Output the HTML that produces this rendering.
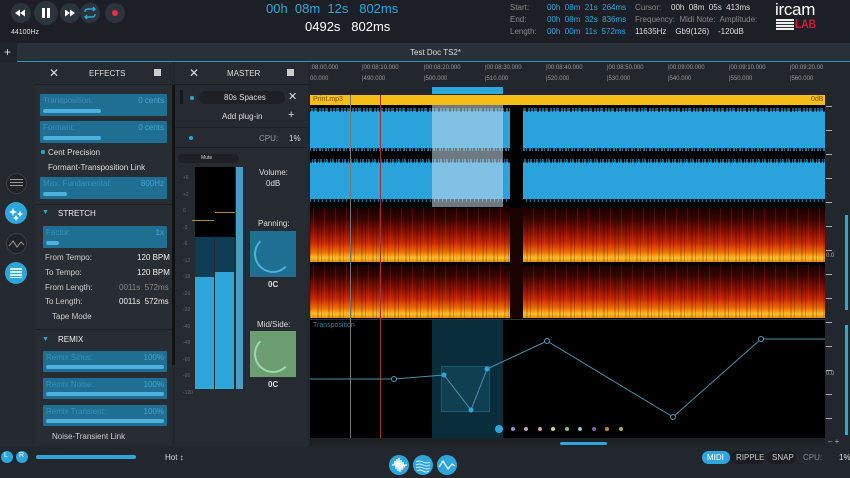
<!DOCTYPE html>
<html><head><meta charset="utf-8"><style>
*{margin:0;padding:0;box-sizing:border-box}
body{width:850px;height:478px;overflow:hidden;background:#22272d;font-family:"Liberation Sans",sans-serif;color:#ddd;position:relative}
.a{position:absolute}
.t{position:absolute;font-size:8px;white-space:nowrap}
.sl{position:absolute;background:#1f6f93;border-radius:1px}
.sl .lb{position:absolute;left:3px;top:2px;font-size:8px;color:#3a8fb5}
.sl .v{position:absolute;right:3px;top:2px;font-size:8px;color:#4aa0c8}
.sl .tr{position:absolute;left:3px;right:3px;bottom:3px;height:4px;background:#4fb0dc;border-radius:2px}
.circ{position:absolute;border-radius:50%}
.ruler{position:absolute;font-size:6px;color:#999}
</style></head><body>
<!-- top bar -->
<div class="a" style="left:0;top:0;width:850px;height:43px;background:#1c2026"></div>
<svg class="a" style="left:0;top:0" width="130" height="28">
<circle cx="21" cy="13" r="10" fill="#2e343b"/>
<path d="M15 13 L20 9.5 V16.5Z M20 13 L25 9.5 V16.5Z" fill="#fff"/>
<circle cx="46" cy="13" r="12" fill="#2e343b"/>
<rect x="42" y="8" width="3" height="10" fill="#fff"/><rect x="47" y="8" width="3" height="10" fill="#fff"/>
<circle cx="70" cy="13" r="10" fill="#2e343b"/>
<path d="M65 9.5 L70 13 L65 16.5Z M70 9.5 L75 13 L70 16.5Z" fill="#fff"/>
<circle cx="90" cy="13" r="10" fill="#2e343b"/>
<path d="M85 12 Q85 9 88 9 H95 M93 7 L95 9 L93 11 M95 14 Q95 17 92 17 H85 M87 15 L85 17 L87 19" fill="none" stroke="#2fa6db" stroke-width="1.4"/>
<circle cx="115" cy="13" r="10" fill="#2e343b"/>
<circle cx="115" cy="13" r="3" fill="#e0304a"/>
</svg>
<div class="t" style="left:11px;top:29px;font-size:7px;color:#ddd">44100Hz</div>
<div class="t" style="left:266px;top:1px;font-size:13px;color:#2fa6db">00h&nbsp; 08m&nbsp; 12s&nbsp;&nbsp; 802ms</div>
<div class="t" style="left:305px;top:19px;font-size:13px;color:#fff">0492s&nbsp;&nbsp; 802ms</div>
<div class="t" style="left:510px;top:3px;color:#888">Start:</div>
<div class="t" style="left:510px;top:15px;color:#888">End:</div>
<div class="t" style="left:510px;top:27px;color:#888">Length:</div>
<div class="t" style="left:547px;top:3px;color:#2fa6db">00h&nbsp; 08m&nbsp; 21s&nbsp; 264ms</div>
<div class="t" style="left:547px;top:15px;color:#2fa6db">00h&nbsp; 08m&nbsp; 32s&nbsp; 836ms</div>
<div class="t" style="left:547px;top:27px;color:#2fa6db">00h&nbsp; 00m&nbsp; 11s&nbsp; 572ms</div>
<div class="t" style="left:635px;top:3px;color:#888">Cursor:</div>
<div class="t" style="left:671px;top:3px;color:#ddd">00h&nbsp; 08m&nbsp; 05s&nbsp; 413ms</div>
<div class="t" style="left:635px;top:15px;color:#888">Frequency:&nbsp; Midi Note:&nbsp; Amplitude:</div>
<div class="t" style="left:635px;top:27px;color:#ddd">11635Hz&nbsp;&nbsp;&nbsp; Gb9(126)&nbsp;&nbsp;&nbsp; -120dB</div>
<div class="t" style="left:775px;top:0px;font-size:17px;color:#fff;letter-spacing:-0.3px">ircam</div>
<div class="a" style="left:776px;top:19px;width:18px;height:11px;background:repeating-linear-gradient(#eee 0 2px,#333 2px 3px)"></div>
<div class="t" style="left:795px;top:17px;font-size:12px;color:#d02030;font-weight:bold;transform:scaleX(0.85);transform-origin:left">LAB</div>
<!-- tab bar -->
<div class="a" style="left:0;top:43px;width:850px;height:19px;background:#2a3037"></div>
<div class="a" style="left:0;top:43px;width:17px;height:19px;background:#20252b"></div>
<div class="t" style="left:4px;top:45px;font-size:12px;color:#ddd">+</div>
<div class="t" style="left:410px;top:48px;font-size:8px;color:#ddd">Test Doc TS2*</div>
<div class="a" style="left:17px;top:61px;width:833px;height:1px;background:#2f93c2"></div>
<!-- left rail -->
<div class="a" style="left:0;top:62px;width:35px;height:384px;background:#252a30"></div>
<div class="circ" style="left:6px;top:173px;width:21px;height:21px;background:#1f2328;border:1px solid #3a4048"></div>
<div class="a" style="left:10px;top:179px;width:13px;height:9px;background:repeating-linear-gradient(#999 0 1px,transparent 1px 3px)"></div>
<div class="circ" style="left:5px;top:202px;width:22px;height:22px;background:#2fa6db"></div>
<svg class="a" style="left:5px;top:202px" width="22" height="22"><g fill="#fff"><path d="M8 6 l1.2 2.8 2.8 1.2 -2.8 1.2 -1.2 2.8 -1.2 -2.8 -2.8 -1.2 2.8 -1.2z"/><path d="M15 9 l1 2 2 1 -2 1 -1 2 -1 -2 -2 -1 2 -1z"/><path d="M11 13 l1 2 2 1 -2 1 -1 2 -1 -2 -2 -1 2 -1z"/></g></svg>
<div class="circ" style="left:6px;top:233px;width:21px;height:21px;background:#1f2328;border:1px solid #3a4048"></div>
<svg class="a" style="left:6px;top:233px" width="21" height="21"><polyline points="3,13 7,8 11,14 15,9 18,12" fill="none" stroke="#999" stroke-width="1"/></svg>
<div class="circ" style="left:5px;top:262px;width:22px;height:22px;background:#2fa6db"></div>
<div class="a" style="left:10px;top:268px;width:12px;height:10px;background:repeating-linear-gradient(#cfefff 0 2px,transparent 2px 3px)"></div>
<!-- effects panel -->
<div class="a" style="left:35px;top:62px;width:137px;height:384px;background:#282d33"></div>
<div class="a" style="left:35px;top:62px;width:137px;height:23px;background:#262b31;border-bottom:1px solid #1d2126"></div>
<div class="t" style="left:49px;top:66px;font-size:12px;color:#ddd">✕</div>
<div class="t" style="left:89px;top:69px;font-size:8px;color:#ddd">EFFECTS</div>
<div class="a" style="left:154px;top:69px;width:7px;height:7px;background:#ccc"></div>
<div class="sl" style="left:40px;top:94px;width:127px;height:22px"><span class="lb">Transposition:</span><span class="v">0 cents</span><div class="tr" style="right:66px"></div></div>
<div class="sl" style="left:40px;top:121px;width:127px;height:22px"><span class="lb">Formant:</span><span class="v">0 cents</span><div class="tr" style="right:66px"></div></div>
<div class="circ" style="left:41px;top:150px;width:4px;height:4px;background:#2fa6db"></div>
<div class="t" style="left:48px;top:148px">Cent Precision</div>
<div class="t" style="left:48px;top:163px">Formant-Transposition Link</div>
<div class="sl" style="left:40px;top:177px;width:127px;height:22px"><span class="lb">Max. Fundamental:</span><span class="v">800Hz</span><div class="tr" style="right:100px"></div></div>
<div class="a" style="left:35px;top:204px;width:137px;height:1px;background:#1d2126"></div>
<div class="t" style="left:42px;top:209px;font-size:7px;color:#2fa6db">▼</div>
<div class="t" style="left:58px;top:209px;font-size:8px;color:#eee">STRETCH</div>
<div class="sl" style="left:43px;top:226px;width:124px;height:22px"><span class="lb">Factor:</span><span class="v">1x</span><div class="tr" style="right:108px"></div></div>
<div class="t" style="left:45px;top:253px;color:#ccc">From Tempo:</div><div class="t" style="left:137px;top:253px;color:#eee">120 BPM</div>
<div class="t" style="left:45px;top:268px;color:#ccc">To Tempo:</div><div class="t" style="left:137px;top:268px;color:#eee">120 BPM</div>
<div class="t" style="left:45px;top:283px;color:#ccc">From Length:</div><div class="t" style="left:119px;top:283px;color:#888">0011s&nbsp; 572ms</div>
<div class="t" style="left:45px;top:297px;color:#ccc">To Length:</div><div class="t" style="left:119px;top:297px;color:#eee">0011s&nbsp; 572ms</div>
<div class="t" style="left:52px;top:312px;color:#ccc">Tape Mode</div>
<div class="a" style="left:35px;top:329px;width:137px;height:1px;background:#1d2126"></div>
<div class="t" style="left:42px;top:336px;font-size:7px;color:#2fa6db">▼</div>
<div class="t" style="left:58px;top:335px;font-size:8px;color:#eee">REMIX</div>
<div class="sl" style="left:43px;top:351px;width:124px;height:21px"><span class="lb">Remix Sinus:</span><span class="v">100%</span><div class="tr"></div></div>
<div class="sl" style="left:43px;top:378px;width:124px;height:21px"><span class="lb">Remix Noise:</span><span class="v">100%</span><div class="tr"></div></div>
<div class="sl" style="left:43px;top:405px;width:124px;height:21px"><span class="lb">Remix Transient:</span><span class="v">100%</span><div class="tr"></div></div>
<div class="t" style="left:52px;top:432px;color:#ccc">Noise-Transient Link</div>
<div class="a" style="left:172px;top:85px;width:3px;height:280px;background:#111"></div>
<!-- master panel -->
<div class="a" style="left:175px;top:62px;width:133px;height:384px;background:#262b31"></div>
<div class="a" style="left:175px;top:62px;width:133px;height:23px;border-bottom:1px solid #1d2126"></div>
<div class="t" style="left:189px;top:66px;font-size:12px;color:#ddd">✕</div>
<div class="t" style="left:227px;top:69px;font-size:8px;color:#ddd">MASTER</div>
<div class="a" style="left:287px;top:69px;width:7px;height:7px;background:#ccc"></div>
<div class="a" style="left:180px;top:90px;width:3px;height:14px;background:#15181c"></div>
<div class="circ" style="left:190px;top:96px;width:4px;height:4px;background:#2fa6db"></div>
<div class="a" style="left:199px;top:91px;width:86px;height:13px;background:#1d2126;border-radius:7px"></div>
<div class="t" style="left:224px;top:93px">80s Spaces</div>
<div class="t" style="left:288px;top:90px;font-size:11px">✕</div>
<div class="t" style="left:222px;top:112px">Add plug-in</div>
<div class="t" style="left:288px;top:109px;font-size:11px">+</div>
<div class="a" style="left:175px;top:127px;width:133px;height:1px;background:#1d2126"></div>
<div class="circ" style="left:189px;top:136px;width:4px;height:4px;background:#2fa6db"></div>
<div class="t" style="left:259px;top:134px;color:#999">CPU:</div><div class="t" style="left:289px;top:134px">1%</div>
<div class="a" style="left:175px;top:147px;width:133px;height:1px;background:#1d2126"></div>
<div class="a" style="left:178px;top:154px;width:61px;height:9px;background:#1d2126;border-radius:5px"></div>
<div class="t" style="left:201px;top:155px;font-size:5px;color:#ccc">Mute</div>
<div class="a" style="left:195px;top:167px;width:40px;height:70px;background:#000"></div>
<div class="a" style="left:195px;top:237px;width:19px;height:40px;background:#0e3d55"></div>
<div class="a" style="left:215px;top:237px;width:19px;height:35px;background:#0e3d55"></div>
<div class="a" style="left:195px;top:277px;width:19px;height:112px;background:#2fa6db"></div>
<div class="a" style="left:215px;top:272px;width:19px;height:117px;background:#2fa6db"></div>
<div class="a" style="left:192px;top:220px;width:22px;height:1px;background:#a09040"></div>
<div class="a" style="left:215px;top:212px;width:20px;height:1px;background:#a09040"></div>
<div class="a" style="left:236px;top:167px;width:7px;height:222px;background:#4a9cc4"></div>
<div class="t" style="left:183px;top:170px;font-size:5px;color:#666;line-height:16.5px">+6<br>+2<br>0<br>-3<br>-6<br>-12<br>-18<br>-26<br>-32<br>-40<br>-48<br>-60<br>-90<br>-120</div>
<div class="t" style="left:259px;top:168px">Volume:</div>
<div class="t" style="left:266px;top:179px">0dB</div>
<div class="t" style="left:258px;top:219px">Panning:</div>
<div class="a" style="left:250px;top:231px;width:46px;height:46px;background:#1f6f93"></div>
<div class="circ" style="left:254px;top:235px;width:38px;height:38px;border:2px solid #4fb0dc;border-color:transparent transparent #4fb0dc #4fb0dc"></div>
<div class="t" style="left:268px;top:280px;font-weight:bold">0C</div>
<div class="t" style="left:257px;top:320px">Mid/Side:</div>
<div class="a" style="left:250px;top:331px;width:46px;height:46px;background:#6c9e72"></div>
<div class="circ" style="left:254px;top:335px;width:38px;height:38px;border:2px solid #9ed9b0;border-color:transparent transparent #9ed9b0 #9ed9b0"></div>
<div class="t" style="left:268px;top:380px;font-weight:bold">0C</div>
<!-- ruler -->
<div class="a" style="left:308px;top:62px;width:542px;height:33px;background:#22272d"></div>
<div class="ruler" style="left:310px;top:63px;line-height:11px">:08:00.000<br>00.000</div>
<div class="ruler" style="left:362px;top:63px;line-height:11px">|00:08:10.000<br>|490.000</div>
<div class="ruler" style="left:424px;top:63px;line-height:11px">|00:08:20.000<br>|500.000</div>
<div class="ruler" style="left:485px;top:63px;line-height:11px">|00:08:30.000<br>|510.000</div>
<div class="ruler" style="left:546px;top:63px;line-height:11px">|00:08:40.000<br>|520.000</div>
<div class="ruler" style="left:607px;top:63px;line-height:11px">|00:08:50.000<br>|530.000</div>
<div class="ruler" style="left:668px;top:63px;line-height:11px">|00:09:00.000<br>|540.000</div>
<div class="ruler" style="left:729px;top:63px;line-height:11px">|00:09:10.000<br>|550.000</div>
<div class="ruler" style="left:790px;top:63px;line-height:11px">|00:09:20.00<br>|560.000</div>
<div class="a" style="left:432px;top:87px;width:71px;height:7px;background:#2fa6db"></div>
<!-- tracks -->
<div class="a" style="left:310px;top:95px;width:515px;height:343px;background:#000"></div>
<div class="a" style="left:310px;top:95px;width:515px;height:10px;background:#f6bd16"></div>
<div class="t" style="left:313px;top:96px;font-size:7px;color:#7a5a00">Print.mp3</div>
<div class="t" style="left:811px;top:96px;font-size:7px;color:#7a5a00">0dB</div>
<div class="a" style="left:310px;top:111px;width:515px;height:37px;background:#2aa3dc"></div>
<div class="a" style="left:310px;top:162px;width:515px;height:37px;background:#2aa3dc"></div>
<div class="a" style="left:310px;top:108px;width:515px;height:4px;background:repeating-linear-gradient(90deg,#000 0 1px,#2aa3dc 1px 3px,#000 3px 4px,#2aa3dc 4px 7px,#000 7px 9px,#2aa3dc 9px 11px);opacity:.6"></div>
<div class="a" style="left:310px;top:147px;width:515px;height:4px;background:repeating-linear-gradient(90deg,#2aa3dc 0 1px,transparent 1px 3px,#2aa3dc 3px 5px,transparent 5px 6px);opacity:.7"></div>
<div class="a" style="left:310px;top:159px;width:515px;height:4px;background:repeating-linear-gradient(90deg,#000 0 2px,#2aa3dc 2px 3px,#000 3px 4px,#2aa3dc 4px 6px);opacity:.6"></div>
<div class="a" style="left:310px;top:198px;width:515px;height:4px;background:repeating-linear-gradient(90deg,#2aa3dc 0 1px,transparent 1px 4px);opacity:.7"></div>
<div class="a" style="left:432px;top:105px;width:71px;height:102px;background:rgba(200,220,235,0.55)"></div>
<div class="a" style="left:310px;top:208px;width:515px;height:54px;background:linear-gradient(#1a0000 0%,#3a0500 20%,#8a1000 45%,#c82a00 65%,#f07000 82%,#ffc030 92%,#e89000 100%)"></div>
<div class="a" style="left:310px;top:265px;width:515px;height:53px;background:linear-gradient(#1a0000 0%,#3a0500 20%,#8a1000 45%,#c82a00 65%,#f07000 82%,#ffc030 92%,#e89000 100%)"></div>
<div class="a" style="left:310px;top:208px;width:515px;height:110px;background:repeating-linear-gradient(90deg,rgba(0,0,0,.2) 0 1px,transparent 1px 3px,rgba(255,90,0,.15) 3px 4px,transparent 4px 7px,rgba(0,0,0,.15) 7px 9px,transparent 9px 11px)"></div>
<div class="a" style="left:310px;top:262px;width:515px;height:3px;background:#000"></div>
<div class="a" style="left:510px;top:105px;width:13px;height:213px;background:#000"></div>
<div class="a" style="left:510px;top:208px;width:13px;height:110px;background:#1a0200"></div>
<div class="a" style="left:310px;top:319px;width:515px;height:1px;background:#333"></div>
<div class="a" style="left:432px;top:320px;width:71px;height:118px;background:#0a2d3b"></div>
<div class="a" style="left:441px;top:366px;width:49px;height:46px;background:#113f52;border:1px solid #1a5a72"></div>
<div class="t" style="left:313px;top:322px;font-size:7px;color:#2f7fa6">Transposition</div>
<div class="a" style="left:350px;top:95px;width:1px;height:343px;background:#777"></div>
<div class="a" style="left:380px;top:95px;width:1px;height:343px;background:#a03030"></div>
<svg class="a" style="left:310px;top:320px" width="515" height="118">
<polyline points="0,59 84,59 134,55 161,90 177,49 237,21 363,97 451,19 515,19" fill="none" stroke="#4f8fa8" stroke-width="1"/>
<g fill="#000" stroke="#4f9fc0"><circle cx="84" cy="59" r="2.5"/><circle cx="237" cy="21" r="2.5"/><circle cx="363" cy="97" r="2.5"/><circle cx="451" cy="19" r="2.5"/></g>
<g fill="#2fa6db"><circle cx="134" cy="55" r="2.5"/><circle cx="161" cy="90" r="2.5"/><circle cx="177" cy="49" r="2.5"/></g>
<circle cx="189" cy="109" r="4" fill="#2fa6db"/>
<g><circle cx="203" cy="109" r="2" fill="#9a8ad0"/><circle cx="216" cy="109" r="2" fill="#c0a0c0"/><circle cx="230" cy="109" r="2" fill="#d0a0b0"/><circle cx="243" cy="109" r="2" fill="#d0d090"/><circle cx="257" cy="109" r="2" fill="#80c090"/><circle cx="270" cy="109" r="2" fill="#90c0d0"/><circle cx="284" cy="109" r="2" fill="#8060b0"/><circle cx="297" cy="109" r="2" fill="#d08040"/><circle cx="311" cy="109" r="2" fill="#a0b050"/></g>
</svg>
<!-- right scale -->
<div class="a" style="left:825px;top:95px;width:25px;height:351px;background:#22272d"></div>
<div class="a" style="left:826px;top:95px;width:6px;height:340px;background:repeating-linear-gradient(transparent 0 11px,#aaa 11px 12px,transparent 12px 24px)"></div>
<div class="t" style="left:826px;top:253px;font-size:6px;color:#aaa">0.0</div>
<div class="t" style="left:826px;top:371px;font-size:6px;color:#aaa">0.0</div>
<div class="a" style="left:845px;top:215px;width:3px;height:95px;background:#2fa6db"></div>
<div class="a" style="left:845px;top:325px;width:3px;height:110px;background:#2fa6db"></div>
<div class="t" style="left:828px;top:437px;font-size:8px;color:#aaa">– +</div>
<!-- h scroll -->
<div class="a" style="left:310px;top:438px;width:515px;height:8px;background:#1d2126"></div>
<div class="a" style="left:560px;top:442px;width:47px;height:3px;background:#2fa6db;border-radius:2px"></div>
<!-- bottom bar -->
<div class="a" style="left:0;top:446px;width:850px;height:32px;background:#22272d"></div>
<div class="circ" style="left:1px;top:451px;width:12px;height:12px;background:#2fa6db"></div>
<div class="t" style="left:4px;top:452px;font-size:7px;color:#fff">L</div>
<div class="circ" style="left:16px;top:451px;width:12px;height:12px;background:#2fa6db"></div>
<div class="t" style="left:19px;top:452px;font-size:7px;color:#fff">R</div>
<div class="a" style="left:36px;top:455px;width:100px;height:4px;background:#2fa6db;border-radius:2px"></div>
<div class="t" style="left:165px;top:453px;color:#ddd">Hot ↕</div>
<svg class="a" style="left:389px;top:455px" width="70" height="21">
<circle cx="10" cy="10" r="10" fill="#2fa6db"/>
<path d="M3 10 H5 L6 6 L7 14 L8 4 L9 16 L10 3 L11 17 L12 5 L13 15 L14 7 L15 12 L16 10 H18" fill="none" stroke="#fff" stroke-width="1.2"/>
<circle cx="34" cy="10" r="10" fill="#2fa6db"/>
<path d="M27 7 Q30 5 34 7 T41 7 M27 10 Q30 8 34 10 T41 10 M27 13 Q30 11 34 13 T41 13 M28 16 Q31 14 34 16 T40 16" fill="none" stroke="#dff3ff" stroke-width="0.9"/>
<circle cx="58" cy="10" r="10" fill="#2fa6db"/>
<path d="M50 12 L54 6 L59 14 L63 9 L66 11" fill="none" stroke="#fff" stroke-width="1.2"/>
</svg>
<div class="a" style="left:702px;top:451px;width:28px;height:13px;background:#2fa6db;border-radius:7px"></div>
<div class="t" style="left:707px;top:453px;color:#fff">MIDI</div>
<div class="a" style="left:731px;top:451px;width:34px;height:13px;background:#1a1e23;border-radius:7px"></div>
<div class="t" style="left:736px;top:453px;color:#ccc">RIPPLE</div>
<div class="a" style="left:767px;top:451px;width:29px;height:13px;background:#1a1e23;border-radius:7px"></div>
<div class="t" style="left:772px;top:453px;color:#ccc">SNAP</div>
<div class="t" style="left:803px;top:453px;color:#888">CPU:</div>
<div class="t" style="left:839px;top:453px;color:#ddd">1%</div>
</body></html>
